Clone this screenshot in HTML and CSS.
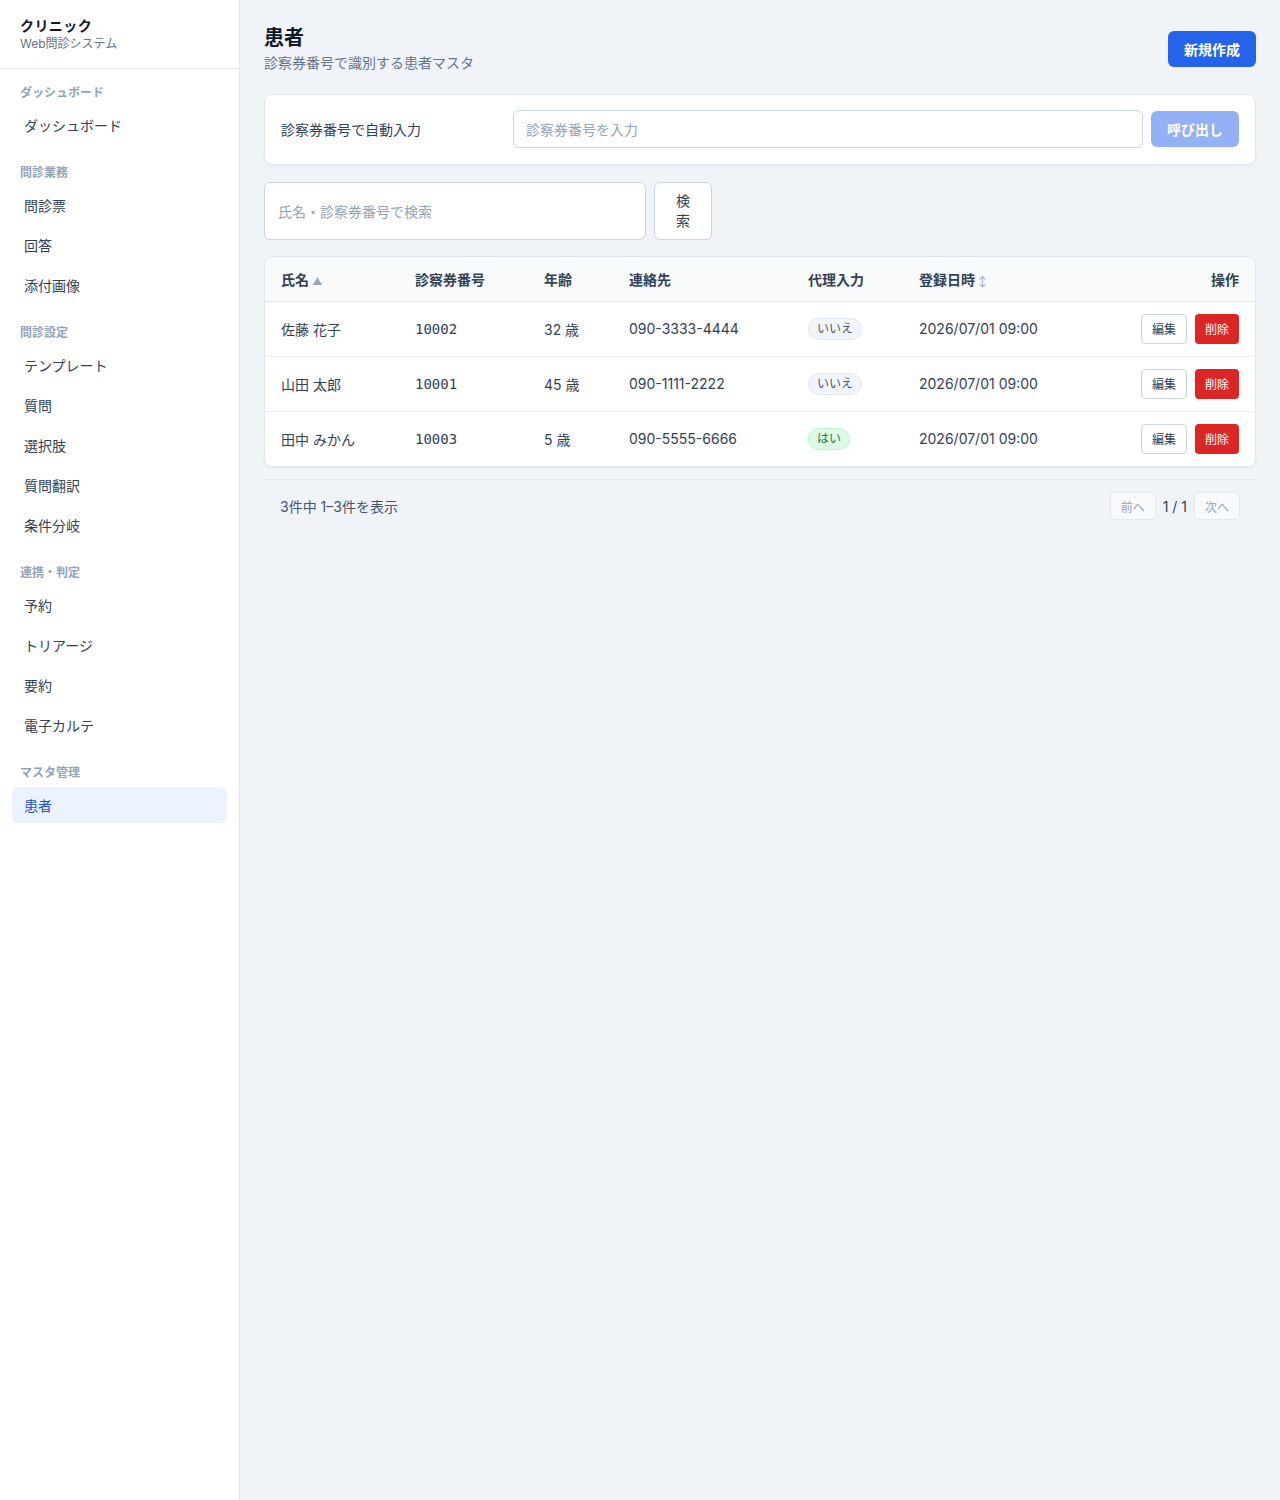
FILE: index.html
```html
<!DOCTYPE html>
<html lang="ja">
<head>
<meta charset="utf-8">
<title>患者</title>
<link rel="stylesheet" href="styles.css">
</head>
<body>
<div class="app">
  <aside class="sidebar">
    <div class="brand">
      <div class="brand-name">クリニック</div>
      <div class="brand-sub">Web問診システム</div>
    </div>
    <nav class="nav">
      <div class="nav-section">
        <div class="nav-label">ダッシュボード</div>
        <a class="nav-item">ダッシュボード</a>
      </div>
      <div class="nav-section">
        <div class="nav-label">問診業務</div>
        <a class="nav-item">問診票</a>
        <a class="nav-item">回答</a>
        <a class="nav-item">添付画像</a>
      </div>
      <div class="nav-section">
        <div class="nav-label">問診設定</div>
        <a class="nav-item">テンプレート</a>
        <a class="nav-item">質問</a>
        <a class="nav-item">選択肢</a>
        <a class="nav-item">質問翻訳</a>
        <a class="nav-item">条件分岐</a>
      </div>
      <div class="nav-section">
        <div class="nav-label">連携・判定</div>
        <a class="nav-item">予約</a>
        <a class="nav-item">トリアージ</a>
        <a class="nav-item">要約</a>
        <a class="nav-item">電子カルテ</a>
      </div>
      <div class="nav-section">
        <div class="nav-label">マスタ管理</div>
        <a class="nav-item active">患者</a>
      </div>
    </nav>
  </aside>

  <main class="main">
    <header class="page-header">
      <div>
        <h1 class="page-title">患者</h1>
        <p class="page-sub">診察券番号で識別する患者マスタ</p>
      </div>
      <button class="btn btn-primary">新規作成</button>
    </header>

    <section class="card lookup">
      <label class="lookup-label">診察券番号で自動入力</label>
      <input class="input lookup-input" placeholder="診察券番号を入力">
      <button class="btn btn-primary-disabled">呼び出し</button>
    </section>

    <form class="search">
      <input class="input search-input" placeholder="氏名・診察券番号で検索">
      <button type="button" class="btn-search">検索</button>
    </form>

    <section class="card table-card">
      <table class="table">
        <colgroup>
          <col class="c-name"><col class="c-no"><col class="c-age"><col class="c-tel"><col class="c-proxy"><col class="c-date"><col>
        </colgroup>
        <thead>
          <tr>
            <th>氏名 <span class="sort">▲</span></th>
            <th>診察券番号</th>
            <th>年齢</th>
            <th>連絡先</th>
            <th>代理入力</th>
            <th>登録日時 <span class="sort">↕</span></th>
            <th class="right">操作</th>
          </tr>
        </thead>
        <tbody>
          <tr>
            <td>佐藤 花子</td>
            <td class="mono">10002</td>
            <td>32 歳</td>
            <td>090-3333-4444</td>
            <td><span class="badge">いいえ</span></td>
            <td>2026/07/01 09:00</td>
            <td class="right"><div class="actions"><button class="btn-sm">編集</button><button class="btn-sm danger">削除</button></div></td>
          </tr>
          <tr>
            <td>山田 太郎</td>
            <td class="mono">10001</td>
            <td>45 歳</td>
            <td>090-1111-2222</td>
            <td><span class="badge">いいえ</span></td>
            <td>2026/07/01 09:00</td>
            <td class="right"><div class="actions"><button class="btn-sm">編集</button><button class="btn-sm danger">削除</button></div></td>
          </tr>
          <tr>
            <td>田中 みかん</td>
            <td class="mono">10003</td>
            <td>5 歳</td>
            <td>090-5555-6666</td>
            <td><span class="badge yes">はい</span></td>
            <td>2026/07/01 09:00</td>
            <td class="right"><div class="actions"><button class="btn-sm">編集</button><button class="btn-sm danger">削除</button></div></td>
          </tr>
        </tbody>
      </table>
    </section>

    <footer class="pager">
      <span class="pager-info">3件中 1–3件を表示</span>
      <div class="pager-ctrl">
        <button class="btn-page" disabled>前へ</button>
        <span class="pager-num">1 / 1</span>
        <button class="btn-page" disabled>次へ</button>
      </div>
    </footer>
  </main>
</div>
</body>
</html>
```

FILE: styles.css
```css
* { box-sizing: border-box; }
html, body {
  margin: 0;
  padding: 0;
  font-family: Inter, "Noto Sans CJK JP", sans-serif;
  color: #1e293b;
  background: #f0f4f9;
}
button, input { font-family: inherit; }

.app {
  display: flex;
  min-height: 1500px;
}

/* Sidebar */
.sidebar {
  width: 240px;
  flex: none;
  background: #ffffff;
  border-right: 1px solid #e2e8f0;
}
.brand {
  padding: 16px 20px 16px;
  border-bottom: 1px solid #e2e8f0;
}
.brand-name {
  font-size: 14px;
  line-height: 20px;
  font-weight: 700;
  color: #0f172a;
  letter-spacing: 0.03em;
}
.brand-sub {
  font-size: 12px;
  line-height: 16px;
  color: #64748b;
}
.nav {
  padding: 16px 12px 0;
  display: flex;
  flex-direction: column;
  gap: 22px;
}
.nav-section {
  display: flex;
  flex-direction: column;
  gap: 4px;
}
.nav-label {
  padding: 0 8px;
  font-size: 12px;
  line-height: 16px;
  font-weight: 700;
  color: #94a3b8;
  margin-bottom: 2px;
}
.nav-item {
  display: flex;
  align-items: center;
  height: 36px;
  padding: 0 12px;
  font-size: 14px;
  color: #334155;
  border-radius: 6px;
}
.nav-item.active {
  background: #eaf3ff;
  color: #1d4ed8;
}

/* Main */
.main {
  flex: 1;
  padding: 25px 24px 24px;
  display: flex;
  flex-direction: column;
}
.page-header {
  display: flex;
  align-items: center;
  justify-content: space-between;
  margin-bottom: 21px;
}
.page-title {
  margin: 0;
  font-size: 20px;
  line-height: 26px;
  font-weight: 700;
  color: #0f172a;
}
.page-sub {
  margin: 2px 0 0;
  font-size: 14px;
  line-height: 20px;
  color: #64748b;
}
.btn {
  border: none;
  border-radius: 6px;
  height: 36px;
  padding: 0 16px;
  font-size: 14px;
  font-weight: 600;
  color: #ffffff;
}
.btn-primary { background: #2563eb; }
.btn-primary-disabled { background: #93b1f4; width: 88px; }

.card {
  background: #ffffff;
  border: 1px solid #e2e8f0;
  border-radius: 8px;
  box-shadow: 0 1px 2px rgba(15, 23, 42, 0.05);
}

.lookup {
  display: grid;
  grid-template-columns: 220px 1fr auto;
  align-items: center;
  column-gap: 12px;
  padding: 15px 16px 16px;
  margin-bottom: 17px;
}
.lookup .btn { margin-left: -4px; }
.lookup-label {
  font-size: 14px;
  color: #334155;
}
.input {
  height: 38px;
  border: 1px solid #cbd5e1;
  border-radius: 6px;
  padding: 0 12px;
  font-size: 14px;
  color: #1e293b;
  background: #ffffff;
}
.input::placeholder { color: #94a3b8; }

.search {
  display: flex;
  gap: 8px;
  width: 448px;
  margin: 0 0 16px;
}
.search-input {
  flex: 1;
  height: auto;
  padding: 0 13px;
}
.btn-search {
  width: 58px;
  padding: 8px 16px;
  border: 1px solid #cbd5e1;
  border-radius: 6px;
  background: #ffffff;
  font-size: 14px;
  line-height: 20px;
  color: #334155;
}

/* Table */
.table-card { overflow: hidden; }
.table {
  width: 100%;
  border-collapse: collapse;
  table-layout: fixed;
}
.c-name { width: 134px; }
.c-no { width: 129px; }
.c-age { width: 85px; }
.c-tel { width: 179px; }
.c-proxy { width: 111px; }
.c-date { width: 200px; }
.table th {
  text-align: left;
  height: 44px;
  padding: 0 16px;
  font-size: 14px;
  font-weight: 700;
  color: #334155;
  background: #f8fafc;
  border-bottom: 1px solid #e2e8f0;
}
.table td {
  height: 55px;
  padding: 0 16px;
  font-size: 14px;
  color: #334155;
  border-bottom: 1px solid #eef2f6;
}
.table tbody tr:last-child td { border-bottom: none; }
.table .right { text-align: right; }
.sort {
  font-size: 10px;
  color: #94a3b8;
  font-weight: 400;
}
.mono {
  font-family: "DejaVu Sans Mono", "Liberation Mono", monospace;
  font-size: 12px;
  color: #1e293b;
}
.badge {
  display: inline-block;
  padding: 0 8px;
  height: 22px;
  line-height: 20px;
  border-radius: 999px;
  border: 1px solid #e2e8f0;
  background: #f1f5f9;
  color: #475569;
  font-size: 12px;
}
.badge.yes {
  background: #dcfce7;
  border-color: #bbf7d0;
  color: #15803d;
}
.actions {
  display: flex;
  justify-content: flex-end;
  gap: 8px;
}
.btn-sm {
  height: 30px;
  padding: 0 10px;
  border: 1px solid #cbd5e1;
  border-radius: 4px;
  background: #ffffff;
  color: #334155;
  font-size: 12px;
}
.btn-sm.danger {
  border: 0;
  background: #dc2626;
  color: #ffffff;
}

/* Pager */
.pager {
  margin-top: 12px;
  border-top: 1px solid #e2e8f0;
  padding: 12px 16px;
  display: flex;
  align-items: center;
  justify-content: space-between;
}
.pager-info {
  font-size: 14px;
  color: #475569;
}
.pager-ctrl {
  display: flex;
  align-items: center;
  gap: 7px;
}
.pager-num {
  font-size: 14px;
  color: #334155;
}
.btn-page {
  height: 28px;
  padding: 0 10px;
  border: 1px solid #e2e8f0;
  border-radius: 4px;
  background: #f8fafc;
  color: #94a3b8;
  font-size: 12px;
}
```
